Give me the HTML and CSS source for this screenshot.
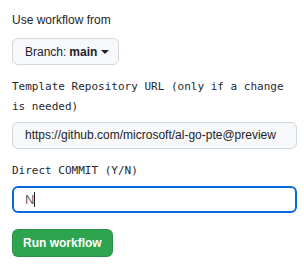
FILE: index.html
```html
<!DOCTYPE html>
<html lang="en">
<head>
    <meta charset="UTF-8">
    <title>Run workflow</title>
    <link rel="stylesheet" href="styles.css">
</head>
<body>
    <div class="panel">
        <div class="label">Use workflow from</div>
        <button class="branch-btn">Branch: <strong>main</strong> <span class="caret"></span></button>

        <div class="field-label mono">Template Repository URL (only if a change is needed)</div>
        <div class="input">https://github.com/microsoft/al-go-pte@preview</div>

        <div class="field-label mono">Direct COMMIT (Y/N)</div>
        <div class="input focused">N<span class="cursor"></span></div>

        <button class="run-btn">Run workflow</button>
    </div>
</body>
</html>
```

FILE: styles.css
```css
body {
    margin: 0;
    background: #ffffff;
    font-family: "Liberation Sans", Arial, sans-serif;
    font-size: 12px;
    color: #1f2328;
}
.panel {
    padding: 10px 7px 0 12px;
    display: flex;
    flex-direction: column;
    align-items: flex-start;
}
.label {
    line-height: 20px;
    margin-bottom: 8px;
}
.branch-btn {
    height: 27px;
    padding: 0 9px 0 12px;
    font-family: inherit;
    font-size: 12px;
    color: #1f2328;
    background: #f6f8fa;
    border: 1px solid #d0d7de;
    border-radius: 6px;
    display: flex;
    align-items: center;
    gap: 3px;
}
.branch-btn strong {
    font-weight: 700;
}
.caret {
    width: 0;
    height: 0;
    border-left: 4px solid transparent;
    border-right: 4px solid transparent;
    border-top: 4px solid #1f2328;
    margin-left: 1px;
}
.field-label {
    margin-top: 12px;
    margin-bottom: 5px;
    line-height: 20px;
    width: 285px;
    color: #24292f;
}
.mono {
    font-family: "DejaVu Sans Mono", monospace;
    font-size: 11px;
}
.input {
    box-sizing: border-box;
    width: 285px;
    height: 27px;
    padding: 0 12px;
    line-height: 25px;
    background: #f6f8fa;
    border: 1px solid #d0d7de;
    border-radius: 6px;
    white-space: nowrap;
    overflow: hidden;
    color: #1f2328;
}
.input.focused {
    background: #ffffff;
    border: 2px solid #0969da;
    line-height: 23px;
    padding-left: 11px;
    color: #57606a;
    font-size: 13px;
}
.cursor {
    display: inline-block;
    width: 1px;
    height: 15px;
    background: #1f2328;
    vertical-align: -3px;
}
.run-btn {
    margin-top: 16px;
    height: 28px;
    padding: 0 10px;
    font-family: inherit;
    font-size: 12px;
    font-weight: 700;
    color: #ffffff;
    background: #2da44e;
    border: 1px solid rgba(27, 31, 36, 0.15);
    border-radius: 6px;
}
```
